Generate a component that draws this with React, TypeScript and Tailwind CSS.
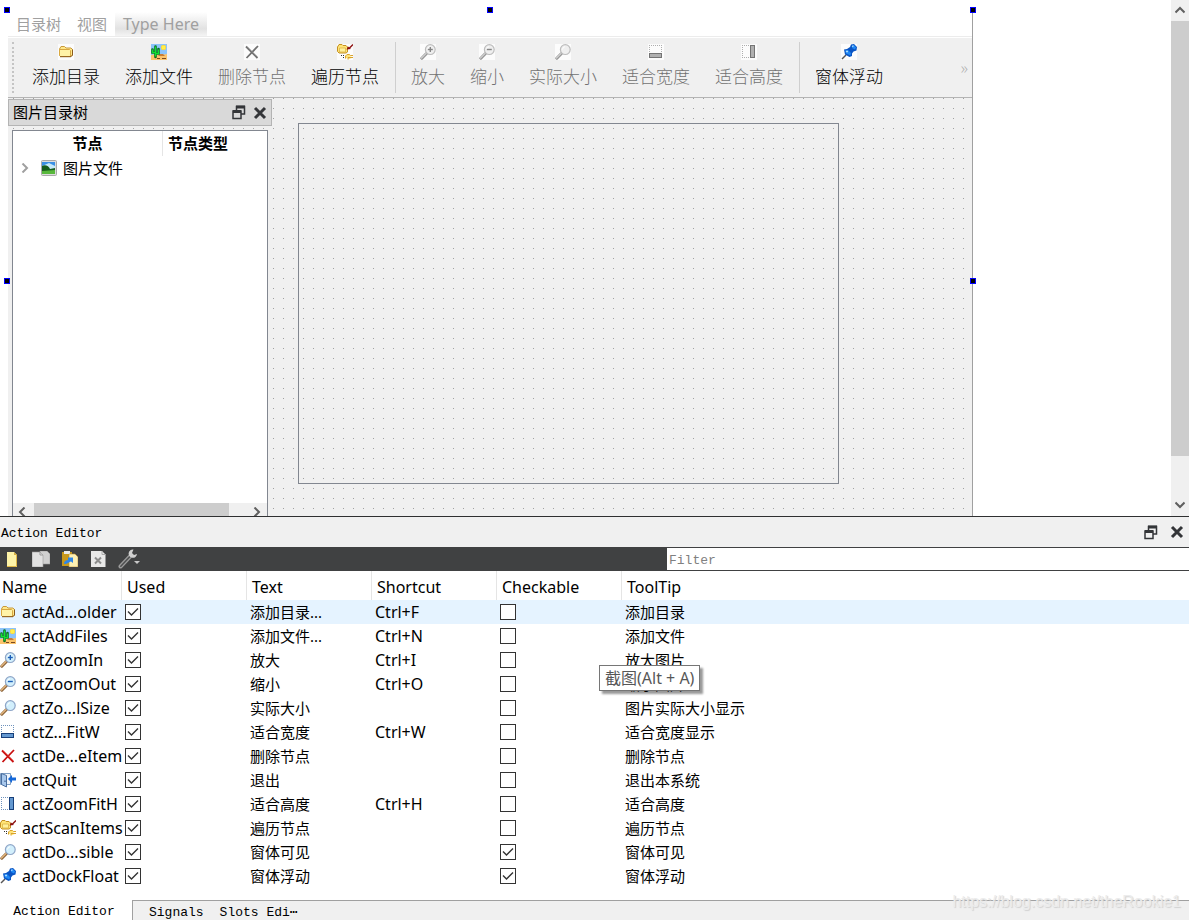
import React from "react";
import clsx from "clsx";

type IconProps = { className?: string };

const Svg = ({ children, className }: IconProps & { children: React.ReactNode }) => (
  <svg viewBox="0 0 16 16" width="16" height="16" className={clsx("shrink-0", className)} fill="none" aria-hidden="true">
    {children}
  </svg>
);

const FolderIcon = ({ className }: IconProps) => (
  <Svg className={className}>
    <path d="M1.5 5L3 2.5H6.5L8 4H13L14.5 5.5V11L13 12.5H2.5L1.5 11.5Z" fill="#ffe88a" stroke="#c99a3c" />
    <path d="M1.5 5.5H11.5L12.5 6.5V12.5H2.5L1.5 11.5Z" fill="#fff3a8" stroke="#d9a840" />
    <path d="M2 12.7H13L14.5 11V5.5" stroke="#8a5a1c" />
  </Svg>
);

const PictureIcon = ({ className }: IconProps) => (
  <Svg className={className}>
    <path d="M0 0H16V16H0Z" fill="#8cc4fa" />
    <path d="M0 11L5 10L10 11L16 10V16H0Z" fill="#fcc46c" />
    <path d="M7 12L9 10H12L14 12Z" fill="#c87c34" />
    <path d="M6 14.5H9M11 14.5H15" stroke="#7a4a20" />
    <path d="M4.5 2.5V13M1.5 5.5V8.5H4M7.5 5V9.5H5" stroke="#0a6a20" strokeWidth="2.6" strokeLinecap="round" />
    <path d="M4.5 2.5V12.5M1.5 5.5V8.5H4M7.5 5.5V9.5H5" stroke="#12e032" strokeWidth="1.3" />
    <rect x="10.5" y="1.5" width="4" height="4" rx="1" fill="#fff04a" stroke="#ffd83a" />
  </Svg>
);

const DeleteIcon = ({ className }: IconProps) => (
  <Svg className={className}>
    <path d="M2 2.5L13.5 14M14 2L2.5 14" stroke="#c80f0f" strokeWidth="1.8" />
    <path d="M3 2.5L13 12.5" stroke="#f05040" strokeWidth="0.6" />
  </Svg>
);

const ScanIcon = ({ className }: IconProps) => (
  <Svg className={className}>
    <path d="M0.5 3L2 0.5H5L6 1.5H9L10.5 3V8L9 9H2L0.5 7.5Z" fill="#ffe476" stroke="#c49022" />
    <path d="M2.5 4H8.5V8H2.5Z" fill="#fff09c" stroke="#d9ae3c" strokeWidth="0.7" />
    <path d="M16 0.5L12 4.5" stroke="#8c1010" strokeWidth="1.4" />
    <path d="M9.5 5.5L11 2.5L14 5Z" fill="#8c1010" />
    <path d="M4 11.5H5M6 11.5H7M6 13.5H7" stroke="#333" />
    <path d="M8.5 14.5V12L10 10.5H12.5L13.5 11.5H16M11 15.5V13.5H16" fill="#ffe476" stroke="#d9a22c" />
  </Svg>
);

const LensIcon = ({ className, sign }: IconProps & { sign?: "+" | "-" }) => (
  <Svg className={className}>
    <path d="M6.5 9.5L1.8 14.2" stroke="#8a6238" strokeWidth="3" strokeLinecap="round" />
    <path d="M6 9.5L1.5 14" stroke="#e2b47c" strokeWidth="1.5" strokeLinecap="round" />
    <circle cx="10.3" cy="5.6" r="4.9" fill="#d2effc" stroke="#8fa6c8" strokeWidth="1.2" />
    <path d="M7.5 5.5A3 3 0 0 1 10 2.7" stroke="#ffffff" />
    {sign && <path d="M7.8 5.5H12.8" stroke="#1d5fb8" strokeWidth="1.4" />}
    {sign === "+" && <path d="M10.3 3V8" stroke="#1d5fb8" strokeWidth="1.4" />}
  </Svg>
);

const ZoomInIcon = (props: IconProps) => <LensIcon {...props} sign="+" />;
const ZoomOutIcon = (props: IconProps) => <LensIcon {...props} sign="-" />;

const FitWidthIcon = ({ className }: IconProps) => (
  <Svg className={className}>
    <path d="M1 1.5H14M1.5 3V9M13.5 3V9" stroke="#6f93bd" strokeDasharray="1 1" />
    <rect x="1.5" y="9.5" width="12" height="4" fill="#6498d0" stroke="#173f7a" />
  </Svg>
);

const FitHeightIcon = ({ className }: IconProps) => (
  <Svg className={className}>
    <path d="M1.5 1V14M3 1.5H9M3 13.5H9" stroke="#6f93bd" strokeDasharray="1 1" />
    <rect x="9.5" y="1.5" width="4" height="12" fill="#6498d0" stroke="#173f7a" />
  </Svg>
);

const PinIcon = ({ className }: IconProps) => (
  <Svg className={className}>
    <path d="M1 15L5 11" stroke="#555" strokeWidth="1.4" />
    <path d="M3 5.5L6 5L9 3L10 0.5L13 0L16 3L15.5 6.5L12.5 7.5L11 9.5V12L8.5 13L4 10.5Z" fill="#0a55c4" />
    <path d="M4 6.5L7 6L10 9L9.5 11.5L5 9.5Z" fill="#2088f4" />
    <path d="M11 1.5L13 1L15 3.5L14 5.5L11 4Z" fill="#2088f4" />
    <path d="M5 7.5H7M11 2.5L12.5 1.8" stroke="#a8dcff" strokeWidth="1.3" />
  </Svg>
);

const QuitIcon = ({ className }: IconProps) => (
  <Svg className={className}>
    <path d="M0.5 1.5H10.5V12.5H0.5Z" fill="#eef4fb" stroke="#7f9fc4" />
    <path d="M1.5 1.5L6.5 3.5V15L1.5 12.5Z" fill="#a8c8ec" stroke="#4a6fa0" />
    <path d="M5 8.5V10" stroke="#2a4a78" />
    <path d="M8 7L12 3V5.5H16V8.5H12V11Z" fill="#1668d8" />
  </Svg>
);

const PhotoIcon = () => (
  <Svg>
    <rect x="0.5" y="0.5" width="15" height="15" rx="1" fill="#dcdcdc" stroke="#a8a8a8" />
    <path d="M1 2H14V14H1Z" fill="#3a8fe4" />
    <path d="M1 6L8 3L14 6V9H1Z" fill="#c5e8f8" />
    <path d="M1 6C4 4 8 6 9 9L14 8V11H1Z" fill="#165c1c" />
    <path d="M1 11L14 10V14H1Z" fill="#58b83c" />
  </Svg>
);

const FloatIcon = () => (
  <svg width="14" height="15" viewBox="0 0 14 15" fill="none" aria-hidden="true">
    <path d="M4.5 5V1.5H12.5V9H9" stroke="#333538" strokeWidth="1.5" />
    <path d="M4 2H13" stroke="#333538" strokeWidth="3" />
    <rect x="1" y="6" width="8" height="7.5" stroke="#333538" strokeWidth="1.5" />
    <path d="M1 6.5H9" stroke="#333538" strokeWidth="3" />
  </svg>
);

const CloseIcon = () => (
  <svg width="14" height="14" viewBox="0 0 14 14" fill="none" aria-hidden="true">
    <path d="M2 2L12 12M12 2L2 12" stroke="#333538" strokeWidth="3" />
  </svg>
);

const Chevron = ({ d, className }: IconProps & { d: string }) => (
  <svg width="10" height="10" viewBox="0 0 10 10" fill="none" className={className} aria-hidden="true">
    <path d={d} stroke="currentColor" strokeWidth="2" />
  </svg>
);

const UP = "M0.5 7.5L5 3L9.5 7.5";
const DOWN = "M0.5 2.5L5 7L9.5 2.5";
const LEFT = "M7.5 0.5L3 5L7.5 9.5";
const RIGHT = "M2.5 0.5L7 5L2.5 9.5";

type Tool = { text: string; icon: React.FC<IconProps>; disabled?: boolean };

const TOOL_GROUPS: Tool[][] = [
  [
    { text: "添加目录", icon: FolderIcon },
    { text: "添加文件", icon: PictureIcon },
    { text: "删除节点", icon: DeleteIcon, disabled: true },
    { text: "遍历节点", icon: ScanIcon },
  ],
  [
    { text: "放大", icon: ZoomInIcon, disabled: true },
    { text: "缩小", icon: ZoomOutIcon, disabled: true },
    { text: "实际大小", icon: LensIcon, disabled: true },
    { text: "适合宽度", icon: FitWidthIcon, disabled: true },
    { text: "适合高度", icon: FitHeightIcon, disabled: true },
  ],
  [{ text: "窗体浮动", icon: PinIcon }],
];

const ACTIONS = [
  { name: "actAd...older", icon: FolderIcon, text: "添加目录...", shortcut: "Ctrl+F", checkable: false, tip: "添加目录" },
  { name: "actAddFiles", icon: PictureIcon, text: "添加文件...", shortcut: "Ctrl+N", checkable: false, tip: "添加文件" },
  { name: "actZoomIn", icon: ZoomInIcon, text: "放大", shortcut: "Ctrl+I", checkable: false, tip: "放大图片" },
  { name: "actZoomOut", icon: ZoomOutIcon, text: "缩小", shortcut: "Ctrl+O", checkable: false, tip: "缩小图片" },
  { name: "actZo...lSize", icon: LensIcon, text: "实际大小", shortcut: "", checkable: false, tip: "图片实际大小显示" },
  { name: "actZ...FitW", icon: FitWidthIcon, text: "适合宽度", shortcut: "Ctrl+W", checkable: false, tip: "适合宽度显示" },
  { name: "actDe...eItem", icon: DeleteIcon, text: "删除节点", shortcut: "", checkable: false, tip: "删除节点" },
  { name: "actQuit", icon: QuitIcon, text: "退出", shortcut: "", checkable: false, tip: "退出本系统" },
  { name: "actZoomFitH", icon: FitHeightIcon, text: "适合高度", shortcut: "Ctrl+H", checkable: false, tip: "适合高度" },
  { name: "actScanItems", icon: ScanIcon, text: "遍历节点", shortcut: "", checkable: false, tip: "遍历节点" },
  { name: "actDo...sible", icon: LensIcon, text: "窗体可见", shortcut: "", checkable: true, tip: "窗体可见" },
  { name: "actDockFloat", icon: PinIcon, text: "窗体浮动", shortcut: "", checkable: true, tip: "窗体浮动" },
];

const COLUMNS = ["Name", "Used", "Text", "Shortcut", "Checkable", "ToolTip"];

const HANDLES = [
  "-left-1 -top-[3px]",
  "left-1/2 -ml-[3px] -top-[3px]",
  "-right-1 -top-[3px]",
  "-left-1 top-[268px]",
  "-right-1 top-[268px]",
];

function CheckBox({ checked, label }: { checked: boolean; label: string }) {
  return (
    <label className="relative block size-4">
      <input
        type="checkbox"
        defaultChecked={checked}
        aria-label={label}
        className="peer block size-4 appearance-none border border-[#333333] bg-white"
      />
      <svg viewBox="0 0 16 16" fill="none" className="pointer-events-none absolute inset-0 hidden size-4 peer-checked:block">
        <path d="M3 7.5L6.5 11L13 4.5" stroke="#333333" strokeWidth="1.4" />
      </svg>
    </label>
  );
}

function MenuBar() {
  return (
    <nav className="flex h-[27px] items-stretch border-b border-[#ececec] bg-white pt-[2px] text-[15px] leading-6 text-[#a0a0a0]">
      <button className="px-2">目录树</button>
      <button className="px-2">视图</button>
      <button className="bg-linear-to-b from-white via-[#e2e2e2] via-70% to-[#f4f4f4] px-2 text-base leading-6">
        Type Here
      </button>
    </nav>
  );
}

function ToolBar() {
  return (
    <div className="mt-px flex h-[60px] items-stretch border-b border-[#b4b4b4] bg-[#f0f0f0] font-light">
      <div className="my-1 ml-1 mr-[6px] w-0 border-l-2 border-dotted border-[#c4c4c4]" />
      {TOOL_GROUPS.map((group, i) => (
        <div key={i} className="flex items-stretch">
          {i > 0 && <div className="my-1 ml-[3px] mr-[3px] w-px bg-[#cfcfcf]" />}
          <div className="mr-px flex gap-px">
            {group.map(({ text, icon: Icon, disabled }) => (
              <button
                key={text}
                disabled={disabled}
                className={clsx("flex flex-col items-center gap-[5px] px-3 pt-[6px]", disabled ? "text-[#727272]" : "text-black")}
              >
                <span className="bg-[#fcfcfc]">
                  <Icon className={clsx(disabled && "opacity-70 grayscale")} />
                </span>
                <span className="whitespace-nowrap text-[17px] leading-6">{text}</span>
              </button>
            ))}
          </div>
        </div>
      ))}
      <span className="ml-auto mr-1 self-center text-base text-[#b0b0b0]">»</span>
    </div>
  );
}

function TreeDock() {
  return (
    <aside className="flex w-[264px] shrink-0 flex-col pt-px">
      <div className="flex h-[27px] items-center border border-[#b4b4b4] bg-[#d9d9d9] pl-1 pr-1 text-[15px]">
        <h2 className="flex-1">图片目录树</h2>
        <button aria-label="Float" className="mr-[7px]">
          <FloatIcon />
        </button>
        <button aria-label="Close">
          <CloseIcon />
        </button>
      </div>
      <div className="ml-1 mr-1 mt-1 flex min-h-0 flex-1 flex-col overflow-hidden border border-b-0 border-[#828790] bg-white text-[15px]">
        <div className="flex h-[25px] items-center font-bold">
          <span className="w-[150px] border-r border-[#e5e5e5] text-center leading-[25px]">节点</span>
          <span className="pl-[5px]">节点类型</span>
        </div>
        <div className="flex h-6 items-center pl-[7px]">
          <Chevron d={RIGHT} className="text-[#a0a0a0]" />
          <span className="ml-[11px] mr-[6px]">
            <PhotoIcon />
          </span>
          图片文件
        </div>
        <div className="-mb-1 mt-auto flex h-[17px] shrink-0 items-center justify-between bg-[#f0f0f0] pl-1 pr-[5px] text-[#606060]">
          <Chevron d={LEFT} />
          <div className="ml-[7px] mr-[23px] h-full flex-1 bg-[#cdcdcd]" />
          <Chevron d={RIGHT} />
        </div>
      </div>
    </aside>
  );
}

function FormCanvas() {
  return (
    <section className="flex min-h-0 flex-1 overflow-hidden bg-white pl-2">
      <div className="relative mt-[10px] flex w-[965px] flex-col border-r border-[#a0a0a0]">
        <MenuBar />
        <ToolBar />
        <div className="flex min-h-0 flex-1 bg-[#f0f0f0] bg-[linear-gradient(to_bottom,transparent_1px,#f0f0f0_1px),linear-gradient(to_right,#a0a0a0_1px,#f0f0f0_1px)] bg-size-[10px_10px] bg-position-[5px_0px]">
          <TreeDock />
          <div className="mb-8 ml-[26px] mr-[133px] mt-[25px] flex-1 border border-[#828790]" />
        </div>
        {HANDLES.map((place) => (
          <span key={place} className={clsx("absolute size-[6px] border border-[#0000ff] bg-black", place)} />
        ))}
      </div>
      <div className="ml-auto flex w-[18px] flex-col items-center bg-[#f0f0f0] text-[#606060]">
        <Chevron d={UP} className="mb-[6px] mt-[5px]" />
        <div className="w-full flex-1 bg-[#cdcdcd]" />
        <Chevron d={DOWN} className="mb-[6px] mt-11" />
      </div>
    </section>
  );
}

function EditorToolBar() {
  return (
    <div className="flex h-6 items-stretch bg-[#404142]">
      <div className="flex w-[667px] items-center gap-3 pl-1">
        <button aria-label="New">
          <Svg>
            <path d="M3 1H10L13 4V16H3Z" fill="#fdf3a8" />
            <path d="M10 1L13 4H10Z" fill="#d8b040" />
            <path d="M12.5 4V15.5H3" stroke="#e0b848" />
          </Svg>
        </button>
        <button aria-label="Copy">
          <svg width="18" height="16" viewBox="0 0 18 16" aria-hidden="true">
            <path d="M8 0H15L18 3V13H8Z" fill="#d0d0d0" stroke="#9c9c9c" strokeWidth="0.6" />
            <path d="M0 1H8L11 4V16H0Z" fill="#e2e2e2" stroke="#9a9a9a" strokeWidth="0.6" />
            <path d="M8 1V4H11" fill="none" stroke="#9a9a9a" />
          </svg>
        </button>
        <button aria-label="Paste">
          <Svg>
            <path d="M0 1H10V15H0Z" fill="#c8981c" />
            <path d="M2 0H8V3H2Z" fill="#e8e8e8" />
            <path d="M7 3H13L16 6V16H7Z" fill="#fdf0b4" stroke="#c09030" strokeWidth="0.6" />
            <path d="M2 13C2 10 4 9 6 9V6.5H11V12L9 10.5C7 11 6 13 2 13Z" fill="#2f86e8" />
          </Svg>
        </button>
        <button aria-label="Delete">
          <Svg>
            <path d="M1 0H12L15.5 3.5V16H1Z" fill="#e8e8e8" />
            <path d="M12 0V3.5H15.5" stroke="#aaaaaa" />
            <path d="M5 6.5L11 12.5M11 6.5L5 12.5" stroke="#8c8c8c" strokeWidth="2" />
          </Svg>
        </button>
        <button aria-label="Configure">
          <svg width="22" height="20" viewBox="0 0 22 20" fill="none" aria-hidden="true">
            <path d="M2.5 17.5L12 7.5" stroke="#9a9a9a" strokeWidth="4" strokeLinecap="round" />
            <path d="M2.8 17.2L12 7.5" stroke="#4e4f50" strokeWidth="1.5" strokeLinecap="round" />
            <path d="M15.5 0.5A4.2 4.2 0 1 0 19 5L16 6L14 4Z" fill="#d0d0d0" />
            <path d="M16 12H22L19 15Z" fill="#c8c8c8" />
          </svg>
        </button>
      </div>
      <input
        type="text"
        placeholder="Filter"
        aria-label="Filter"
        className="my-px min-w-0 flex-1 bg-white px-[2px] pt-[3px] font-['Liberation_Mono',monospace] text-[13px] outline-none placeholder:text-[#808080]"
      />
    </div>
  );
}

function ActionTable() {
  return (
    <table className="w-full table-fixed border-separate border-spacing-0 text-left text-[15px]">
      <colgroup>
        <col className="w-[122px]" />
        <col className="w-[125px]" />
        <col className="w-[125px]" />
        <col className="w-[125px]" />
        <col className="w-[125px]" />
        <col />
      </colgroup>
      <thead>
        <tr className="h-[29px]">
          {COLUMNS.map((column, i) => (
            <th
              key={column}
              className={clsx(
                "p-0 pt-[2px] text-base font-normal leading-6",
                i === 0 ? "pl-[2px]" : "pl-[5px]",
                i < COLUMNS.length - 1 && "border-r border-[#e5e5e5]"
              )}
            >
              {column}
            </th>
          ))}
        </tr>
      </thead>
      <tbody>
        {ACTIONS.map(({ name, icon: Icon, text, shortcut, checkable, tip }, i) => (
          <tr key={name} className={clsx("h-6 whitespace-nowrap leading-6", i === 0 && "bg-[#e5f3ff]")}>
            <td className="p-0">
              <div className="flex items-center gap-[6px] text-base leading-6">
                <Icon />
                {name}
              </div>
            </td>
            <td className="p-0 pl-[3px]">
              <CheckBox checked label={`${name} used`} />
            </td>
            <td className="p-0 pl-[3px]">{text}</td>
            <td className="p-0 pl-[3px] text-base leading-6">{shortcut}</td>
            <td className="p-0 pl-[3px]">
              <CheckBox checked={checkable} label={`${name} checkable`} />
            </td>
            <td className="p-0 pl-[3px]">{tip}</td>
          </tr>
        ))}
      </tbody>
    </table>
  );
}

export default function App() {
  return (
    <div className="flex h-screen flex-col overflow-hidden bg-white font-['Noto_Sans','Noto_Sans_CJK_SC',sans-serif] text-black">
      <FormCanvas />
      <section className="relative shrink-0 border-t border-[#2f3031]">
        <div className="flex h-[30px] items-center bg-[#f0f0f0] pr-[5px]">
          <h2 className="flex-1 pl-px pt-1 font-['Liberation_Mono',monospace] text-[13px]">Action Editor</h2>
          <button aria-label="Float" className="mr-3">
            <FloatIcon />
          </button>
          <button aria-label="Close">
            <CloseIcon />
          </button>
        </div>
        <EditorToolBar />
        <ActionTable />
        <div role="tooltip" className="absolute left-[599px] top-[148px] border border-[#767676] bg-white px-[5px] text-base leading-6 text-[#575757] shadow-[3px_3px_2px_#00000066]">
          截图(Alt + A)
        </div>
        <div className="mt-3 flex h-5 font-['Liberation_Mono',monospace] text-[13px] leading-6">
          <button className="w-[132px] bg-white pr-1">Action Editor</button>
          <div className="flex flex-1 gap-4 border-l border-t border-[#a0a0a0] bg-[#f0f0f0] pl-4">
            <button>Signals</button>
            <button>Slots Edi⋯</button>
          </div>
        </div>
        <span className="absolute bottom-2 right-2 font-['Liberation_Sans',sans-serif] text-[16px] leading-5 text-[#ececec] [text-shadow:1px_1px_1px_#d0d0d0]">
          https://blog.csdn.net/theRookie1
        </span>
      </section>
    </div>
  );
}
